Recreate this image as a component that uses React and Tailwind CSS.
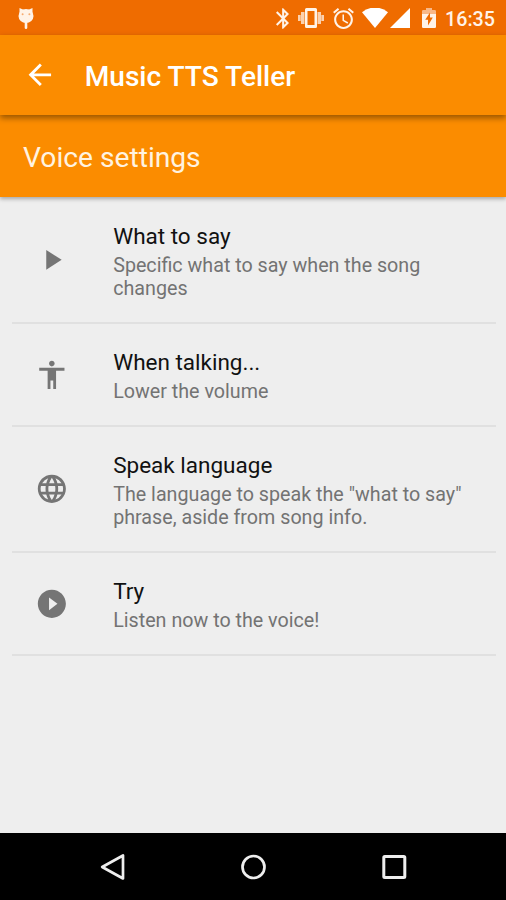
import { MdAccessibility, MdArrowBack, MdLanguage, MdPlayArrow, MdPlayCircleFilled } from 'react-icons/md';

const settings = [
  {
    icon: MdPlayArrow,
    title: 'What to say',
    summary: 'Specific what to say when the song changes',
  },
  {
    icon: MdAccessibility,
    title: 'When talking...',
    summary: 'Lower the volume',
  },
  {
    icon: MdLanguage,
    title: 'Speak language',
    summary: 'The language to speak the "what to say" phrase, aside from song info.',
  },
  {
    icon: MdPlayCircleFilled,
    title: 'Try',
    summary: 'Listen now to the voice!',
  },
];

function StatusBar() {
  return (
    <div className="flex h-[35px] shrink-0 items-center bg-[#ef6c00] pl-[18px] pr-[11px] pt-px text-[#fff3e8]">
      {/* Notification */}
      <svg className="h-[23px] w-4" viewBox="0 0 16 23" fill="currentColor">
        <ellipse cx="8" cy="9" rx="7.5" ry="7" />
        <path d="M1.5 1l4.5 2-4.5 4zM14.5 1L10 3l4.5 4z" />
        <rect x="6.7" y="14" width="2.6" height="8" rx="1.3" />
        <circle cx="4.6" cy="7.2" r="1" fill="#f6ab70" />
        <circle cx="11.4" cy="7.2" r="1" fill="#f6ab70" />
      </svg>

      {/* Bluetooth */}
      <svg className="ml-auto h-[21px] w-[13px]" viewBox="5 2 12.71 20" fill="currentColor">
        <path d="M17.71 7.71L12 2h-1v7.59L6.41 5 5 6.41 10.59 12 5 17.59 6.41 19 11 14.41V22h1l5.71-5.71-4.3-4.29 4.3-4.29zM13 5.83l1.88 1.88L13 9.59V5.83zm1.88 10.46L13 18.17v-3.76l1.88 1.88z" />
      </svg>
      {/* Vibrate */}
      <svg className="ml-[9px] h-5 w-[26px]" viewBox="0 0 26 20" fill="currentColor">
        <path fillRule="evenodd" d="M8.5 0h9A1.5 1.5 0 0 1 19 1.5v17a1.5 1.5 0 0 1-1.5 1.5h-9A1.5 1.5 0 0 1 7 18.5v-17A1.5 1.5 0 0 1 8.5 0zM9.5 3v14h7V3z" />
        <path d="M3 4h3.5v12H3zM19.5 4H23v12h-3.5z" opacity=".75" />
        <path d="M0 7h2.7v6H0zM23.3 7H26v6h-2.7z" opacity=".75" />
      </svg>
      {/* Alarm */}
      <svg className="ml-[9px] h-[21px] w-[21px]" viewBox="2 1.86 20 20.14" fill="currentColor">
        <path d="M22 5.72l-4.6-3.86-1.29 1.53 4.6 3.86L22 5.72zM7.88 3.39L6.6 1.86 2 5.71l1.29 1.53 4.59-3.85zM12.5 8H11v6l4.75 2.85.75-1.23-4-2.37V8zM12 4c-4.97 0-9 4.03-9 9s4.02 9 9 9c4.97 0 9-4.03 9-9s-4.03-9-9-9zm0 16c-3.87 0-7-3.13-7-7s3.13-7 7-7 7 3.13 7 7-3.13 7-7 7z" />
      </svg>
      {/* Wifi */}
      <svg className="ml-2 h-5 w-[26px]" viewBox="0 0 26 20" fill="#fff">
        <path d="M13 20L0 4.2a20.5 20.5 0 0 1 26 0z" />
      </svg>
      {/* Signal */}
      <svg className="ml-0.5 h-5 w-5" viewBox="0 0 20 20" fill="#fff">
        <path d="M20 0v20H0z" />
      </svg>
      {/* Battery */}
      <svg className="ml-3 h-5 w-[14px]" viewBox="0 0 14 20">
        <path d="M4 2V0h6v2h2.7A1.3 1.3 0 0 1 14 3.3V6H0V3.3A1.3 1.3 0 0 1 1.3 2z" fill="#f8b888" />
        <path d="M0 6h14v12.7a1.3 1.3 0 0 1-1.3 1.3H1.3A1.3 1.3 0 0 1 0 18.7z" fill="#fff3e8" />
        <path d="M8 4.5v5h2.8L6 17.5v-5.7H3.2z" fill="#ef6c00" />
      </svg>
      <span className="ml-[9px] pt-[3px] text-[19.7px] font-medium leading-none">16:35</span>
    </div>
  );
}

function NavigationBar() {
  return (
    <div className="flex h-[67px] shrink-0 items-center justify-center gap-[115px] bg-black">
      <svg className="size-[26px]" viewBox="0 0 26 26" fill="none" stroke="#eee" strokeWidth="2.7" strokeLinejoin="round">
        <path d="M24 1.5v23L3.2 13z" />
      </svg>
      <svg className="size-[26px]" viewBox="0 0 26 26" fill="none" stroke="#eee" strokeWidth="2.7">
        <circle cx="13.5" cy="13" r="11" />
      </svg>
      <svg className="size-[26px]" viewBox="0 0 26 26" fill="none" stroke="#eee" strokeWidth="3">
        <rect x="2.8" y="2.5" width="21" height="21" rx="1" />
      </svg>
    </div>
  );
}

function SettingRow({ icon: Icon, title, summary }) {
  return (
    <li className="flex items-center border-b-2 border-[#e0e0e0] pb-[21.6px] pl-[22.5px] pr-5 pt-[25px]">
      <Icon className="-mt-[3px] size-[33.7px] shrink-0 text-[#757575]" />
      <div className="ml-[45px]">
        <h2 className="text-[22.5px] leading-[27px] text-[#111]">{title}</h2>
        <p className="mt-[4.9px] text-[19.7px] leading-[22.7px] text-[#737373]">{summary}</p>
      </div>
    </li>
  );
}

export default function App() {
  return (
    <div className="flex h-[900px] w-[506px] flex-col overflow-hidden bg-[#eee] font-['Roboto',sans-serif]">
      <StatusBar />

      {/* Toolbar */}
      <header className="relative z-20 flex h-[80px] shrink-0 items-center bg-[#fb8c00] pl-[23px] text-white shadow-[0_3px_6px_rgba(0,0,0,0.4)]">
        <MdArrowBack className="size-[33.7px]" />
        <h1 className="ml-[28px] pt-1 text-[28.1px] font-medium leading-none">Music TTS Teller</h1>
      </header>

      <div className="relative z-10 flex h-[82px] shrink-0 items-center bg-[#fb8c00] pl-[23px] pt-1 text-[28.2px] text-[#fff3e0] shadow-[0_2px_4px_rgba(0,0,0,0.3)]">
        Voice settings
      </div>

      <ul className="flex-1 pl-3 pr-[10px] pt-px">
        {settings.map((item) => (
          <SettingRow key={item.title} {...item} />
        ))}
      </ul>

      <NavigationBar />
    </div>
  );
}
